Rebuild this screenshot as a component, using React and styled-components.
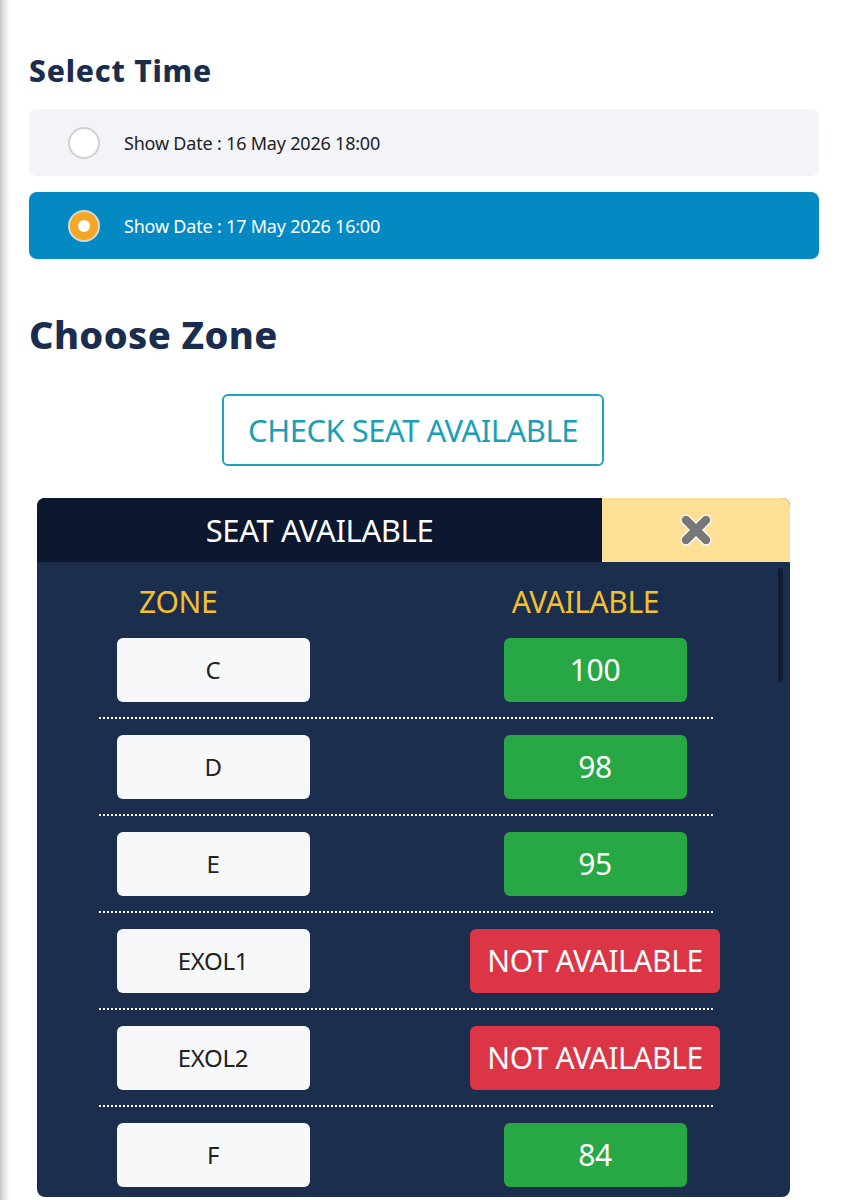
import React from 'react';
import styled, { createGlobalStyle } from 'styled-components';

const GlobalStyle = createGlobalStyle`
  html, body {
    margin: 0;
    padding: 0;
  }
  body {
    font-family: "Noto Sans", "Open Sans", sans-serif;
    background: linear-gradient(to right, #c9c9c9 0px, #e4e4e4 4px, #ffffff 10px);
    min-height: 1200px;
  }
`;

const Page = styled.div`
  padding: 53px 25px 0 29px;
`;

const Heading = styled.h2`
  margin: 0;
  color: #1b2d4f;
  font-weight: 800;
  font-size: ${p => p.size}px;
  line-height: 1.2;
  letter-spacing: ${p => p.spacing || 0.3}px;
`;

const Options = styled.div`
  display: flex;
  flex-direction: column;
  gap: 16px;
  margin-top: 20px;
`;

const Option = styled.div`
  display: flex;
  align-items: center;
  height: 67px;
  padding-left: 39px;
  border-radius: 8px;
  background: ${p => (p.active ? '#0589c2' : '#f3f4f8')};
  color: ${p => (p.active ? '#ffffff' : '#222222')};
  font-size: 18px;
  letter-spacing: -0.2px;
`;

const Radio = styled.span`
  box-sizing: border-box;
  width: 32px;
  height: 32px;
  border-radius: 50%;
  border: ${p => (p.active ? '2px solid #d8d8d8' : '2px solid #d0d0d0')};
  background: ${p => (p.active ? '#f5a623' : '#ffffff')};
  display: flex;
  align-items: center;
  justify-content: center;
  margin-right: 24px;

  &::after {
    content: '';
    display: ${p => (p.active ? 'block' : 'none')};
    width: 12px;
    height: 12px;
    border-radius: 50%;
    background: #ffffff;
  }
`;

const ZoneSection = styled.section`
  margin-top: 53px;
`;

const CheckWrap = styled.div`
  display: flex;
  justify-content: center;
  margin-top: 36px;
  padding-right: 22px;
`;

const CheckButton = styled.button`
  box-sizing: border-box;
  width: 382px;
  height: 72px;
  border: 2px solid #1fa3b8;
  border-radius: 6px;
  background: #ffffff;
  color: #1aa0b5;
  font-family: inherit;
  font-size: 31px;
  letter-spacing: -0.5px;
  padding: 0;
`;

const Panel = styled.div`
  position: relative;
  margin: 32px 29px 0 8px;
  border-radius: 8px;
  overflow: hidden;
  background: #1b2e4e;
`;

const PanelHeader = styled.div`
  display: flex;
  height: 64px;
`;

const PanelTitle = styled.div`
  flex: 1;
  display: flex;
  align-items: center;
  justify-content: center;
  background: #0b1830;
  color: #ffffff;
  font-size: 31px;
  letter-spacing: -0.4px;
`;

const CloseButton = styled.div`
  width: 188px;
  display: flex;
  align-items: center;
  justify-content: center;
  background: #fde095;
`;

const PanelBody = styled.div`
  height: 635px;
  overflow: hidden;
  padding: 0 77px 0 62px;
`;

const ScrollThumb = styled.div`
  position: absolute;
  right: 7px;
  top: 70px;
  width: 5px;
  height: 114px;
  border-radius: 3px;
  background: #0f1c33;
`;

const ColumnHeads = styled.div`
  display: flex;
  justify-content: space-between;
  padding: 20px 54px 0 40px;
  color: #f5c02e;
  font-size: 30px;
  line-height: 40px;
  letter-spacing: -0.4px;
`;

const Row = styled.div`
  display: grid;
  grid-template-columns: 228px 1fr 236px;
  align-items: center;
  padding: 16px 0 15px;
  border-bottom: 2px dotted #ffffff;

  &:first-of-type {
    padding-top: 9px;
  }

  &:last-child {
    border-bottom: none;
  }
`;

const ZoneCell = styled.div`
  justify-self: center;
  width: 193px;
  height: 64px;
  border-radius: 6px;
  background: #f7f8fa;
  color: #222222;
  font-size: 24px;
  letter-spacing: -0.3px;
  display: flex;
  align-items: center;
  justify-content: center;
`;

const CountCell = styled.div`
  grid-column: 3;
  justify-self: center;
  width: ${p => (p.full ? '250px' : '183px')};
  height: 64px;
  border-radius: 6px;
  background: ${p => (p.full ? '#dc3545' : '#28a745')};
  color: #ffffff;
  font-size: 30px;
  letter-spacing: -0.4px;
  display: flex;
  align-items: center;
  justify-content: center;
`;

const zones = [
  { name: 'C', seats: 100 },
  { name: 'D', seats: 98 },
  { name: 'E', seats: 95 },
  { name: 'EXOL1', seats: 0 },
  { name: 'EXOL2', seats: 0 },
  { name: 'F', seats: 84 },
];

const showTimes = [
  { label: 'Show Date : 16 May 2026 18:00', active: false },
  { label: 'Show Date : 17 May 2026 16:00', active: true },
];

const CloseIcon = () => (
  <svg width="36" height="36" viewBox="0 0 36 36">
    <g strokeLinecap="round">
      <path d="M8 8 L28 28 M28 8 L8 28" stroke="#ffffff" strokeWidth="11" />
      <path d="M8 8 L28 28 M28 8 L8 28" stroke="#777777" strokeWidth="8.5" />
    </g>
  </svg>
);

export default function App() {
  return (
    <>
      <GlobalStyle />
      <Page>
        <Heading size={30} spacing={0.8}>Select Time</Heading>
        <Options>
          {showTimes.map(t => (
            <Option key={t.label} active={t.active}>
              <Radio active={t.active} />
              {t.label}
            </Option>
          ))}
        </Options>

        <ZoneSection>
          <Heading size={38} spacing={0.4}>Choose Zone</Heading>
          <CheckWrap>
            <CheckButton>CHECK SEAT AVAILABLE</CheckButton>
          </CheckWrap>

          <Panel>
            <PanelHeader>
              <PanelTitle>SEAT AVAILABLE</PanelTitle>
              <CloseButton>
                <CloseIcon />
              </CloseButton>
            </PanelHeader>
            <PanelBody>
              <ColumnHeads>
                <span>ZONE</span>
                <span>AVAILABLE</span>
              </ColumnHeads>
              {zones.map(z => (
                <Row key={z.name}>
                  <ZoneCell>{z.name}</ZoneCell>
                  <CountCell full={z.seats === 0}>
                    {z.seats === 0 ? 'NOT AVAILABLE' : z.seats}
                  </CountCell>
                </Row>
              ))}
            </PanelBody>
            <ScrollThumb />
          </Panel>
        </ZoneSection>
      </Page>
    </>
  );
}
